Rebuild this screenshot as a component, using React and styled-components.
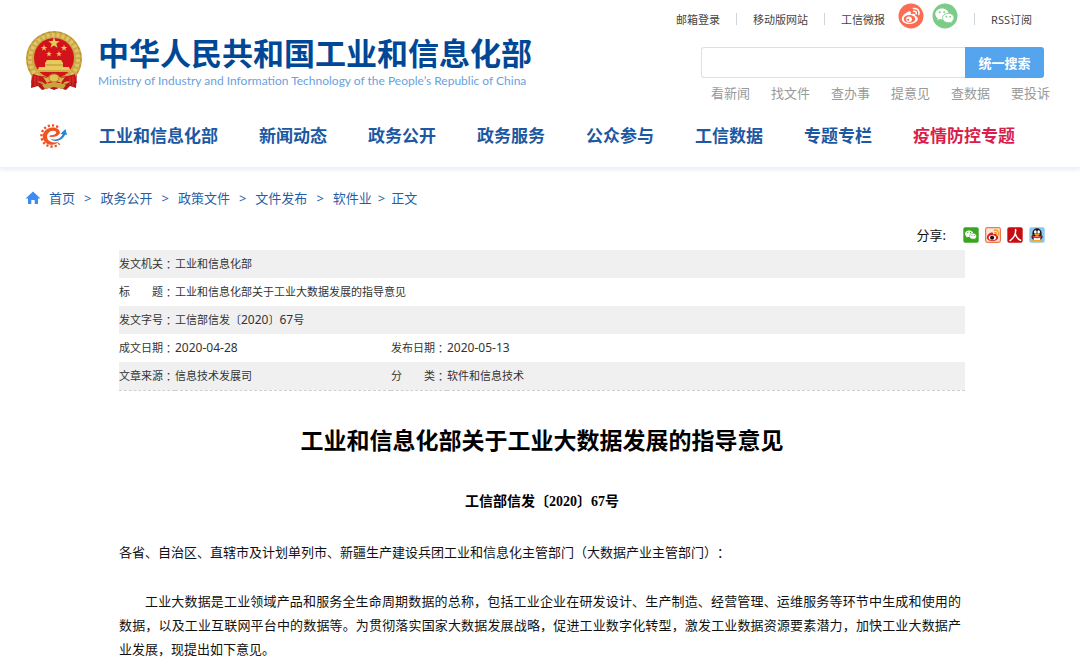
import styled, { createGlobalStyle } from "styled-components";

const topLinks = ["邮箱登录", "移动版网站", "工信微报"];
const quickLinks = ["看新闻", "找文件", "查办事", "提意见", "查数据", "要投诉"];
const navItems = [
  "工业和信息化部",
  "新闻动态",
  "政务公开",
  "政务服务",
  "公众参与",
  "工信数据",
  "专题专栏",
];
const crumbs = ["首页", "政务公开", "政策文件", "文件发布", "软件业"];

const starPoints = (cx, cy, r) =>
  Array.from({ length: 10 }, (_, i) => {
    const a = (Math.PI / 5) * i - Math.PI / 2;
    const d = i % 2 ? r * 0.4 : r;
    return `${cx + d * Math.cos(a)},${cy + d * Math.sin(a)}`;
  }).join(" ");

const Emblem = () => (
  <svg width="58" height="62" viewBox="0 0 58 62" aria-hidden="true">
    <path d="M7 42 L6 58 L13 56 L17 60 L24 58 L29 60 L34 58 L41 60 L45 56 L51 58 L52 42Z" fill="#b3161b" />
    <circle cx="29" cy="29" r="28" fill="#cba946" />
    <circle cx="29" cy="29" r="24" fill="none" stroke="#dfc468" strokeWidth="4" strokeDasharray="3 2" />
    <circle cx="29" cy="29" r="27" fill="none" stroke="#b08d32" strokeWidth="1" strokeDasharray="3 3" />
    <circle cx="29" cy="28" r="20" fill="#d3131b" />
    <g fill="#e6cb5c">
      <polygon points={starPoints(29, 13, 6)} />
      <polygon points={starPoints(19, 18, 3.4)} />
      <polygon points={starPoints(39, 18, 3.4)} />
      <polygon points={starPoints(24, 24, 3)} />
      <polygon points={starPoints(34, 24, 3)} />
      <path d="M22 30h14l2 3H20zM20 33h18v4H20zM14 37h30l2 5H12z" />
    </g>
    <path d="M13 41h32M20 35h18" stroke="#b8932f" />
    <path d="M8 44 Q18 48 29 46 Q40 48 50 44 L52 53 Q40 49 38 54 L29 52 L20 54 Q16 49 6 53Z" fill="#c4181d" />
    <path d="M18 47q5 2 7-2l4-1 4 1q2 4 7 2l-4 6q-4-3-7-1-3-2-7 1z" fill="#d8b244" />
    <ellipse cx="29" cy="48" rx="5" ry="4" fill="#e3c258" stroke="#a88327" />
    <path d="M17 55q12-5 24 0l-3 4-9-2-9 2z" fill="#c9a43c" />
    <path d="M10 46v10M13 47v8M45 47v8M48 46v10" stroke="#e2342f" />
  </svg>
);

const GearLogo = () => (
  <svg width="28" height="24" viewBox="0 0 28 24" aria-hidden="true">
    <path d="M19 3.200A10.600 10.600 0 1 0 20.500 19.500" fill="none" stroke="#ee4f23" strokeWidth="2.400" strokeDasharray="2.200 2" />
    <path
      d="M10.500 12.800C14 13.600 19 12.500 20.800 9.500C21.500 5.500 17 2.800 12.500 3.600C7 4.500 3.200 9 3.800 13.500C4.500 18.500 9 21.200 13.500 20.700C16.500 20.400 19 19 20.200 17.500C17 18.800 12.500 18.800 9.800 16.500C7 14 7.800 9.800 11 7.600C14 5.800 17.500 6.800 17.200 8.800C17 10.800 13.500 11.500 11 11.200Z"
      fill="#f05423"
    />
    <path d="M10.500 14C14 16.800 21.500 16 23.600 10.300L21.500 9.700L26.500 5L28 11L26 10.700C23.500 17 14.500 19.300 10.500 14Z" fill="#2b86cf" />
  </svg>
);

const WeiboMark = ({ ink = "#fff", hole = "#fb6d52", wave = "#fff" }) => (
  <g>
    <path d="M10.500 8.500C7 10 3.800 13 3.800 16C3.800 19 7.500 21 11.500 21C16.500 21 19.800 18.300 19.800 15.700C19.800 14 18.500 13.200 17.300 12.900C17.900 11 16.200 10 12.700 11.300C13.300 9.300 12.500 7.900 10.500 8.500Z" fill={ink} />
    <ellipse cx="11.500" cy="16" rx="5.800" ry="3.900" fill={hole} />
    <circle cx="11" cy="16.300" r="2.900" fill={ink} />
    <circle cx="10.200" cy="16.800" r="1.100" fill={hole} />
    <path d="M15.500 5.500C19.500 4.800 22 8 20.800 11.500M15.800 8.300C17.700 8 18.700 9.300 18.200 10.800" fill="none" stroke={wave} strokeWidth="1.500" strokeLinecap="round" />
  </g>
);

const WechatMark = ({ eye = "#7dcb89" }) => (
  <g>
    <path d="M10 5.500C6 5.500 3.300 8 3.300 11C3.300 12.800 4.300 14.300 5.800 15.300L5.200 17.200L7.500 16.100C8.300 16.300 9.200 16.400 10 16.400C14 16.400 16.700 14 16.700 11C16.700 8 14 5.500 10 5.500Z" fill="#fff" />
    <path d="M16.300 10.300C12.900 10.300 10.500 12.400 10.500 15C10.500 17.600 12.900 19.700 16.300 19.700C17 19.700 17.700 19.600 18.300 19.400L20.300 20.400L19.800 18.700C21.200 17.800 22 16.500 22 15C22 12.400 19.600 10.300 16.300 10.300Z" fill="#fff" stroke={eye} strokeWidth="0.800" />
    <g fill={eye}>
      <circle cx="7.800" cy="9.300" r="1" />
      <circle cx="12.200" cy="9.300" r="1" />
      <circle cx="14.400" cy="13.700" r="0.900" />
      <circle cx="18.200" cy="13.700" r="0.900" />
    </g>
  </g>
);

const WeiboRound = () => (
  <svg width="26" height="26" viewBox="0 0 26 26">
    <circle cx="13" cy="13" r="12.500" fill="#fb6d52" />
    <WeiboMark />
  </svg>
);

const WechatRound = () => (
  <svg width="26" height="26" viewBox="0 0 26 26">
    <circle cx="13" cy="13" r="12.500" fill="#7dcb89" />
    <WechatMark />
  </svg>
);

const ShareWechat = () => (
  <svg width="16" height="16" viewBox="0 0 26 26">
    <rect x="0.500" y="0.500" width="25" height="25" rx="3" fill="#3aa51f" />
    <WechatMark eye="#3aa51f" />
  </svg>
);

const ShareWeibo = () => (
  <svg width="16" height="16" viewBox="0 0 26 26">
    <rect x="1" y="1" width="24" height="24" rx="3" fill="#fde3d3" stroke="#ee7a45" strokeWidth="2" />
    <path d="M10 9C6 10 3 14 3 17C3 20.500 7 23 12 23C17.500 23 21.500 20 21.500 17C21.500 15 20 14 18.500 13.600C18.800 11 16 10.500 13 12C13.500 9.500 12.500 8.500 10 9Z" fill="#d8232a" />
    <ellipse cx="12" cy="17.500" rx="6" ry="4" fill="#fff" />
    <circle cx="11.500" cy="17.500" r="3.400" fill="#1d1013" />
    <path d="M15 5C20 4 23.500 8 22 13M15.500 8.700C18 8.500 19.500 10 18.800 12" fill="none" stroke="#f39a2b" strokeWidth="2.200" strokeLinecap="round" />
  </svg>
);

const SharePeople = () => (
  <svg width="16" height="16" viewBox="0 0 26 26">
    <rect x="0.500" y="0.500" width="25" height="25" rx="3" fill="#c80d12" />
    <path d="M14 4C14.500 11 11 18 5 22M13.500 11C15 16 18 20 22 21.500" fill="none" stroke="#fff" strokeWidth="2.400" strokeLinecap="round" />
  </svg>
);

const ShareQQ = () => (
  <svg width="16" height="16" viewBox="0 0 26 26">
    <rect x="0.500" y="0.500" width="25" height="25" rx="3" fill="#8cc8ee" />
    <ellipse cx="13" cy="16" rx="9" ry="6" fill="#1b1b1f" />
    <ellipse cx="13" cy="10" rx="7.500" ry="8" fill="#1b1b1f" />
    <ellipse cx="13" cy="18.500" rx="5.500" ry="4.500" fill="#fff" />
    <ellipse cx="10.300" cy="8" rx="2.200" ry="2.800" fill="#fff" />
    <ellipse cx="15.700" cy="8" rx="2.200" ry="2.800" fill="#fff" />
    <ellipse cx="13" cy="12" rx="4.500" ry="1.500" fill="#f7a51c" />
    <path d="M5.500 13.500Q13 17.500 20.500 13.500V16.500Q13 20 5.500 16.500Z" fill="#e22b25" />
    <path d="M6 22.500h6M14 22.500h6" stroke="#f7a51c" strokeWidth="2.500" strokeLinecap="round" />
  </svg>
);

const HomeIcon = () => (
  <svg width="16" height="14" viewBox="0 0 16 14" aria-hidden="true">
    <path d="M8 0.500L15.500 7.500H13V13H9.700V9H6.300V13H3V7.500H0.500Z" fill="#3b8df5" />
  </svg>
);

const Label = ({ children }) => (
  <MetaLabel>
    <span>{children}</span>
    <Colon>：</Colon>
  </MetaLabel>
);

const App = () => {
  return (
    <>
      <GlobalStyle />
      <Header>
        <HeaderTop>
          <Brand href="#">
            <Emblem />
            <BrandText>
              <BrandName>中华人民共和国工业和信息化部</BrandName>
              <BrandSub>
                Ministry of Industry and Information Technology of the People’s
                Republic of China
              </BrandSub>
            </BrandText>
          </Brand>
          <Tools>
            <TopLinks>
              {topLinks.map((text) => (
                <TopItem key={text}>
                  <a href="#">{text}</a>
                </TopItem>
              ))}
              <Social>
                <a href="#" aria-label="微博">
                  <WeiboRound />
                </a>
                <a href="#" aria-label="微信">
                  <WechatRound />
                </a>
              </Social>
              <TopItem>
                <a href="#">RSS订阅</a>
              </TopItem>
            </TopLinks>
            <Search onSubmit={(e) => e.preventDefault()}>
              <input type="text" aria-label="搜索" />
              <button>统一搜索</button>
            </Search>
            <QuickLinks>
              {quickLinks.map((text) => (
                <a href="#" key={text}>
                  {text}
                </a>
              ))}
            </QuickLinks>
          </Tools>
        </HeaderTop>
        <Nav>
          <GearLogo />
          <NavList>
            {navItems.map((text) => (
              <NavLink href="#" key={text}>
                {text}
              </NavLink>
            ))}
            <NavLink href="#" $hot>
              疫情防控专题
            </NavLink>
          </NavList>
        </Nav>
      </Header>
      <Breadcrumb>
        <HomeIcon />
        {crumbs.map((text, i) => (
          <Crumb key={text} $last={i === crumbs.length - 1}>
            <a href="#">{text}</a>
            <span>&gt;</span>
          </Crumb>
        ))}
        <span>正文</span>
      </Breadcrumb>
      <Share>
        <span>分享:</span>
        <ShareIcons>
          <button aria-label="分享到微信">
            <ShareWechat />
          </button>
          <button aria-label="分享到微博">
            <ShareWeibo />
          </button>
          <button aria-label="分享到人民微博">
            <SharePeople />
          </button>
          <button aria-label="分享到QQ">
            <ShareQQ />
          </button>
        </ShareIcons>
      </Share>
      <Article>
        <Meta>
          <tbody>
            <tr>
              <th scope="row">
                <Label>发文机关</Label>
              </th>
              <td colSpan="3">工业和信息化部</td>
            </tr>
            <tr>
              <th scope="row">
                <Label>标　　题</Label>
              </th>
              <td colSpan="3">工业和信息化部关于工业大数据发展的指导意见</td>
            </tr>
            <tr>
              <th scope="row">
                <Label>发文字号</Label>
              </th>
              <td colSpan="3">
                工信部信发〔<Num>2020</Num>〕<Num>67</Num>号
              </td>
            </tr>
            <tr>
              <th scope="row">
                <Label>成文日期</Label>
              </th>
              <td>
                <Num>2020-04-28</Num>
              </td>
              <th scope="row">
                <Label>发布日期</Label>
              </th>
              <td>
                <Num>2020-05-13</Num>
              </td>
            </tr>
            <tr>
              <th scope="row">
                <Label>文章来源</Label>
              </th>
              <td>信息技术发展司</td>
              <th scope="row">
                <Label>分　　类</Label>
              </th>
              <td>软件和信息技术</td>
            </tr>
          </tbody>
        </Meta>
        <Title>工业和信息化部关于工业大数据发展的指导意见</Title>
        <DocNumber>工信部信发〔2020〕67号</DocNumber>
        <Paragraph>
          各省、自治区、直辖市及计划单列市、新疆生产建设兵团工业和信息化主管部门（大数据产业主管部门）：
        </Paragraph>
        <Paragraph $indent>
          工业大数据是工业领域产品和服务全生命周期数据的总称，包括工业企业在研发设计、生产制造、经营管理、运维服务等环节中生成和使用的数据，以及工业互联网平台中的数据等。为贯彻落实国家大数据发展战略，促进工业数字化转型，激发工业数据资源要素潜力，加快工业大数据产业发展，现提出如下意见。
        </Paragraph>
      </Article>
    </>
  );
};

const GlobalStyle = createGlobalStyle`
  * {
    box-sizing: border-box;
  }
  body {
    margin: 0;
    background: #fff;
    color: #333;
    font-family: "Noto Sans", "Noto Sans CJK SC", sans-serif;
    font-size: 13px;
    text-spacing-trim: space-all;
  }
  a {
    color: inherit;
    text-decoration: none;
  }
  button {
    border: none;
    padding: 0;
    background: none;
    font: inherit;
    cursor: pointer;
  }
  svg {
    display: block;
    flex-shrink: 0;
  }
`;

const Header = styled.header`
  box-shadow: 0 2px 4px 1px #e8eff6;
`;

const HeaderTop = styled.div`
  display: flex;
  justify-content: space-between;
  padding: 3px 30px 0 25px;
`;

const Brand = styled.a`
  display: flex;
  align-items: flex-start;
  gap: 15px;
  padding-top: 27px;
`;

const BrandText = styled.span`
  display: flex;
  flex-direction: column;
  padding-top: 1px;
  white-space: nowrap;
`;

const BrandName = styled.span`
  color: #004896;
  font-family: "Noto Sans CJK SC", sans-serif;
  font-size: 31px;
  font-weight: 700;
  line-height: 42px;
`;

const BrandSub = styled.span`
  color: #6b9fdc;
  font-family: Lato, "Noto Sans", sans-serif;
  font-size: 12px;
  line-height: 16px;
`;

const Tools = styled.div`
  display: flex;
  flex-direction: column;
`;

const TopLinks = styled.div`
  display: flex;
  align-items: center;
  height: 32px;
  padding-right: 18px;
  justify-content: flex-end;
  color: #444;
  font-size: 11px;
`;

const TopItem = styled.span`
  display: flex;
  align-items: center;

  & + &::before,
  div + &::before {
    content: "";
    width: 1px;
    height: 12px;
    margin: 0 16px;
    background: #ccd6dc;
  }
`;

const Social = styled.div`
  display: flex;
  gap: 8px;
  padding-left: 13px;
  padding-bottom: 6px;
`;

const Search = styled.form`
  display: flex;
  width: 343px;
  height: 31px;
  margin: 12px 6px 0 0;
  align-self: flex-end;

  input {
    flex: 1;
    min-width: 0;
    border: 1px solid #d3e2f0;
    border-right: none;
    border-radius: 3px 0 0 3px;
    outline: none;
  }
  button {
    width: 79px;
    border-radius: 0 3px 3px 0;
    background: #55a4ee;
    color: #fff;
    font-weight: 700;
  }
`;

const QuickLinks = styled.div`
  display: flex;
  justify-content: flex-end;
  gap: 21px;
  margin-top: 5px;
  color: #999;
  line-height: 20px;
`;

const Nav = styled.nav`
  display: flex;
  align-items: center;
  gap: 32px;
  padding: 17px 39px 15px;
`;

const NavList = styled.div`
  display: flex;
  gap: 41px;
`;

const NavLink = styled.a`
  color: ${(props) => (props.$hot ? "#d81e4a" : "#1d58a2")};
  font-size: 17px;
  font-weight: 700;
  line-height: 32px;
  white-space: nowrap;
`;

const Breadcrumb = styled.nav`
  display: flex;
  align-items: center;
  padding: 21px 25px 0;
  color: #1f5fa8;
  line-height: 20px;

  svg {
    margin-right: 8px;
  }
`;

const Crumb = styled.span`
  display: flex;

  span {
    margin: ${(props) => (props.$last ? "0 6px" : "0 9px")};
  }
`;

const Share = styled.div`
  display: flex;
  align-items: center;
  justify-content: flex-end;
  gap: 17px;
  padding: 17px 35px 5px;
  color: #111;
  line-height: 20px;
`;

const ShareIcons = styled.div`
  display: flex;
  gap: 6px;
`;

const Article = styled.main`
  padding: 0 115px 0 119px;
`;

const Meta = styled.table`
  width: 100%;
  border-collapse: collapse;
  border-bottom: 1px dashed #d0d0d0;
  font-size: 11px;
  line-height: 16px;

  tr {
    height: 28px;
  }
  tr:nth-child(odd) {
    background: #f0f0f0;
  }
  th,
  td {
    padding: 0;
    font-weight: 400;
    text-align: left;
    white-space: nowrap;
  }
  th {
    width: 56px;
  }
  td:nth-child(2):not([colspan]) {
    width: 216px;
  }
`;

const MetaLabel = styled.span`
  display: flex;
`;

/* the TC face centres the full-width colon in its box */
const Colon = styled.span`
  font-family: "Noto Sans CJK TC", sans-serif;
`;

const Num = styled.span`
  font-size: 12px;
`;

const Title = styled.h1`
  margin: 31px 0 0;
  color: #000;
  font-size: 23px;
  line-height: 36px;
  text-align: center;
`;

const DocNumber = styled.p`
  margin: 34px 0 0;
  color: #000;
  font-family: "Liberation Serif", "Noto Sans CJK SC", serif;
  font-size: 14px;
  font-weight: 700;
  line-height: 20px;
  text-align: center;
`;

const Paragraph = styled.p`
  margin: 0 0 25px;
  padding-right: 4px;
  color: #111;
  line-height: 24px;
  text-align: justify;
  text-indent: ${(props) => (props.$indent ? "2em" : "0")};

  ${DocNumber} + & {
    margin-top: 28px;
  }
`;

export default App;
